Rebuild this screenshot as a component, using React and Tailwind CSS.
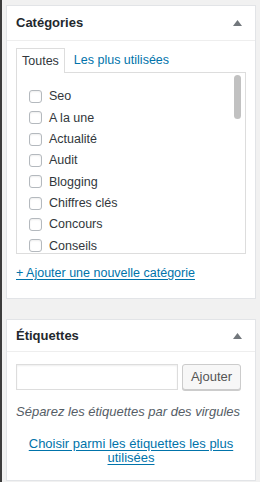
const CATEGORIES = [
  "Seo",
  "A la une",
  "Actualité",
  "Audit",
  "Blogging",
  "Chiffres clés",
  "Concours",
  "Conseils",
];

function Toggle() {
  return (
    <svg width="9" height="6" viewBox="0 0 9 6" className="mr-[3px]">
      <path d="M4.5 0 L9 6 L0 6 Z" fill="#72777c" />
    </svg>
  );
}

export default function App() {
  return (
    <div
      className="flex h-[482px] w-[260px] overflow-hidden border-l-2 border-[#3c3c3c] bg-[#f1f1f1] text-[13px] text-[#32373c]"
      style={{ fontFamily: '"Liberation Sans", Arial, sans-serif' }}
    >
      <div className="flex flex-col pl-[4px] pt-[5px]">
        {/* Catégories */}
        <div className="h-[294px] w-[250px] border border-[#e2e4e7] bg-white">
          <div className="flex h-[35px] items-center justify-between border-b border-[#eeeeee] pl-[9px] pr-[10px]">
            <h2 className="text-[13px] font-bold text-[#23282d]">Catégories</h2>
            <Toggle />
          </div>
          <div className="px-[9px] pt-[7px]">
            <div className="flex items-end text-[12.5px]">
              <div className="relative z-10 -mb-px flex h-[25px] items-center border border-b-0 border-[#dddddd] bg-white px-[5px] text-[#32373c]">
                Toutes
              </div>
              <span className="flex h-[24px] items-center pl-[9px] text-[#0073aa]">Les plus utilisées</span>
            </div>
            <div className="relative h-[182px] w-[230px] overflow-hidden border border-[#dddddd] bg-white pl-[12px] pt-[13px] text-[12.5px]">
              {CATEGORIES.map((c) => (
                <label key={c} className="flex h-[21.33px] items-center">
                  <span className="h-[13px] w-[13px] rounded-[3px] border border-[#b4b9be] bg-white shadow-[inset_0_1px_2px_rgba(0,0,0,0.07)]" />
                  <span className="pl-[7px]">{c}</span>
                </label>
              ))}
              <div className="absolute right-[4px] top-[2px] h-[44px] w-[7px] rounded-full bg-[#c1c1c1]" />
            </div>
            <div className="pt-[10px] text-[12.5px] text-[#0073aa] underline underline-offset-2">
              + Ajouter une nouvelle catégorie
            </div>
          </div>
        </div>

        {/* Étiquettes */}
        <div className="mt-[20px] h-[162px] w-[250px] border border-[#e2e4e7] bg-white">
          <div className="flex h-[32px] items-center justify-between border-b border-[#eeeeee] pl-[9px] pr-[10px]">
            <h2 className="text-[13px] font-bold text-[#23282d]">Étiquettes</h2>
            <Toggle />
          </div>
          <div className="px-[9px] pt-[12px]">
            <div className="flex gap-[4px]">
              <input className="h-[26px] w-[162px] border border-[#dddddd] bg-white shadow-[inset_0_1px_2px_rgba(0,0,0,0.07)] outline-none" />
              <button className="h-[26px] w-[59px] rounded-[3px] border border-[#cccccc] bg-[#f7f7f7] text-[13px] text-[#555555] shadow-[0_1px_0_#cccccc]">
                Ajouter
              </button>
            </div>
            <p className="pt-[12px] italic text-[#555d66]">Séparez les étiquettes par des virgules</p>
            <p className="px-[10px] pt-[15px] text-center leading-[14px] text-[#0073aa] underline underline-offset-2">
              Choisir parmi les étiquettes les plus utilisées
            </p>
          </div>
        </div>
      </div>
    </div>
  );
}
